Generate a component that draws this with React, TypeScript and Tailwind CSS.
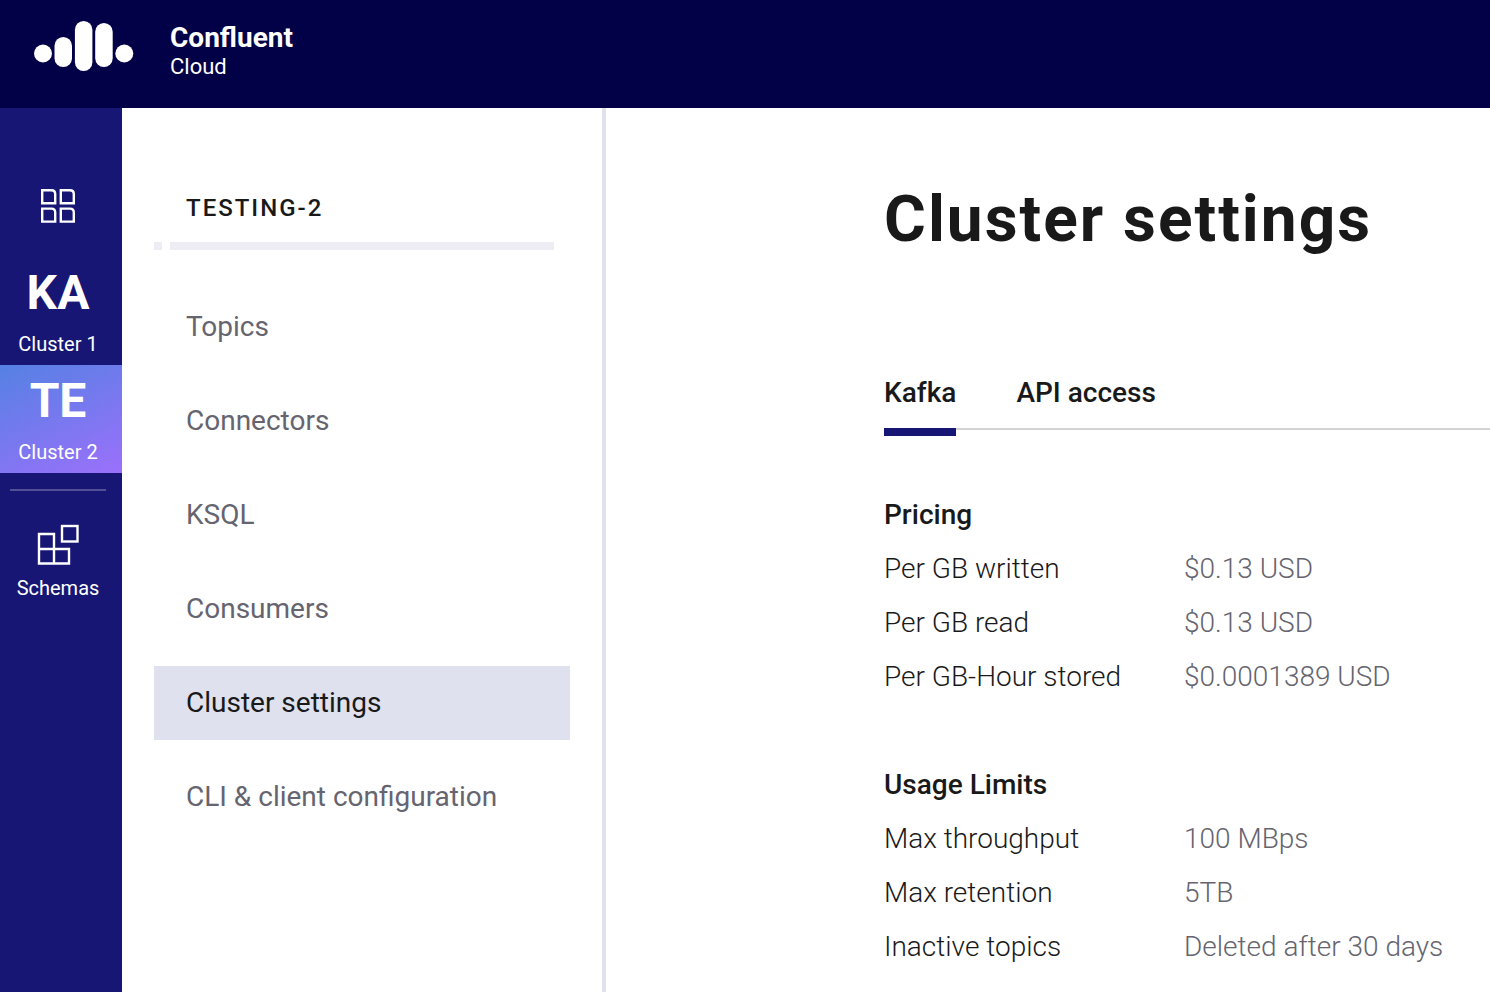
import React, { useState } from "react";

const navItems = [
  "Topics",
  "Connectors",
  "KSQL",
  "Consumers",
  "Cluster settings",
  "CLI & client configuration",
];

const tabs = ["Kafka", "API access"];

const pricing: [string, string][] = [
  ["Per GB written", "$0.13 USD"],
  ["Per GB read", "$0.13 USD"],
  ["Per GB-Hour stored", "$0.0001389 USD"],
];

const limits: [string, string][] = [
  ["Max throughput", "100 MBps"],
  ["Max retention", "5TB"],
  ["Inactive topics", "Deleted after 30 days"],
];

function Logo() {
  return (
    <svg width="100" height="50" viewBox="0 0 100 50" fill="white" aria-hidden="true">
      <circle cx="9" cy="32.5" r="9" />
      <rect x="20.5" y="16" width="17.5" height="30" rx="8.75" />
      <rect x="40.9" y="0" width="17.5" height="50" rx="8.75" />
      <rect x="61.2" y="2" width="17.5" height="44" rx="8.75" />
      <circle cx="90.3" cy="32.5" r="9" />
    </svg>
  );
}

function GridIcon() {
  return (
    <svg width="34" height="34" viewBox="0 0 34 34" fill="none" stroke="white" strokeWidth="2.4" aria-hidden="true">
      <path d="M1.2 1.2H10.5Q14.2 1.2 14.2 5V14.2H1.2Z" />
      <path d="M19.8 1.2H29Q32.8 1.2 32.8 5V14.2H19.8Z" />
      <path d="M1.2 19.6H10.5Q14.2 19.6 14.2 23.4V32.6H1.2Z" />
      <path d="M19.8 19.6H29Q32.8 19.6 32.8 23.4V32.6H19.8Z" />
    </svg>
  );
}

function SchemasIcon() {
  return (
    <svg width="42" height="42" viewBox="0 0 42 42" fill="none" stroke="white" strokeWidth="2.4" aria-hidden="true">
      <path d="M2 10H17V39.5H2ZM2 25H32V39.5H17" />
      <rect x="25" y="2" width="15.5" height="15.5" />
    </svg>
  );
}

function ClusterLink({ code, name, active }: { code: string; name: string; active?: boolean }) {
  return (
    <a
      href="#"
      aria-current={active ? "true" : undefined}
      className={`flex h-27 flex-col items-center pr-1.5 pt-2 ${
        active ? "bg-linear-[155deg] from-[#5581e3] to-[#9b70fb]" : ""
      }`}
    >
      <span className="text-5xl font-bold leading-14">{code}</span>
      <span className="mt-[11px] text-xl leading-6">{name}</span>
    </a>
  );
}

function DetailTable({ title, rows }: { title: string; rows: [string, string][] }) {
  return (
    <table className="w-full table-fixed text-left text-[28px] leading-[54px]">
      <caption className="text-left font-medium">{title}</caption>
      <colgroup>
        <col className="w-[300px]" />
        <col />
      </colgroup>
      <tbody className="font-light">
        {rows.map(([label, value]) => (
          <tr key={label}>
            <th scope="row" className="p-0 font-light">{label}</th>
            <td className="p-0 text-[#65646f]">{value}</td>
          </tr>
        ))}
      </tbody>
    </table>
  );
}

export default function App() {
  const [tab, setTab] = useState("Kafka");

  return (
    <div className="flex min-h-screen flex-col bg-white font-[Roboto,sans-serif] text-[#191919]">
      <header className="flex h-27 shrink-0 items-start gap-9 bg-[#020046] pl-[34px] pt-[21px] text-white">
        <Logo />
        <div>
          <div className="text-[28px] font-bold leading-[34px]">Confluent</div>
          <div className="text-[22px] leading-6">Cloud</div>
        </div>
      </header>

      <div className="flex grow">
        <nav aria-label="Clusters" className="flex w-[122px] shrink-0 flex-col bg-[#171675] pt-20 text-white">
          <a href="#" aria-label="Home" className="mb-[34px] flex justify-center pr-1.5 pt-px">
            <GridIcon />
          </a>
          <ClusterLink code="KA" name="Cluster 1" />
          <ClusterLink code="TE" name="Cluster 2" active />
          <hr className="ml-2.5 mr-4 mt-4 border-t-2 border-white/25" />
          <a href="#" className="mt-[33px] flex flex-col items-center gap-2.5 pr-1.5">
            <SchemasIcon />
            <span className="text-xl leading-6">Schemas</span>
          </a>
        </nav>

        <aside className="w-[484px] shrink-0 border-r-4 border-[#dfe1ee] px-8 pt-20">
          <h2 className="px-8 text-2xl font-medium leading-10 tracking-[2px]">TESTING-2</h2>
          <div className="mr-4 mt-3.5 flex gap-2" aria-hidden="true">
            <span className="size-2 bg-[#ededf3]" />
            <span className="h-2 grow bg-[#ededf3]" />
          </div>
          <nav aria-label="Cluster sections" className="mt-10 flex flex-col gap-5">
            {navItems.map((item) => (
              <a
                key={item}
                href="#"
                aria-current={item === "Cluster settings" ? "page" : undefined}
                className={`px-8 text-[28px] leading-[74px] ${
                  item === "Cluster settings" ? "bg-[#dfe1ee]" : "text-[#65646f]"
                }`}
              >
                {item}
              </a>
            ))}
          </nav>
        </aside>

        <main className="min-w-0 grow pl-[278px] pt-[72px]">
          <h1 className="text-[64px] font-bold leading-20 tracking-[2px]">Cluster settings</h1>
          <div role="tablist" className="mb-[58px] mt-[113px] flex gap-[60px] border-b-2 border-[#d3d3d5]">
            {tabs.map((name) => (
              <button
                key={name}
                type="button"
                role="tab"
                aria-selected={tab === name}
                onClick={() => setTab(name)}
                className={`-mb-2 border-b-8 pb-[15px] text-[28px] font-medium leading-10 ${
                  tab === name ? "border-[#171675]" : "border-transparent"
                }`}
              >
                {name}
              </button>
            ))}
          </div>
          <div className="flex flex-col gap-[54px]">
            <DetailTable title="Pricing" rows={pricing} />
            <DetailTable title="Usage Limits" rows={limits} />
          </div>
        </main>
      </div>
    </div>
  );
}
